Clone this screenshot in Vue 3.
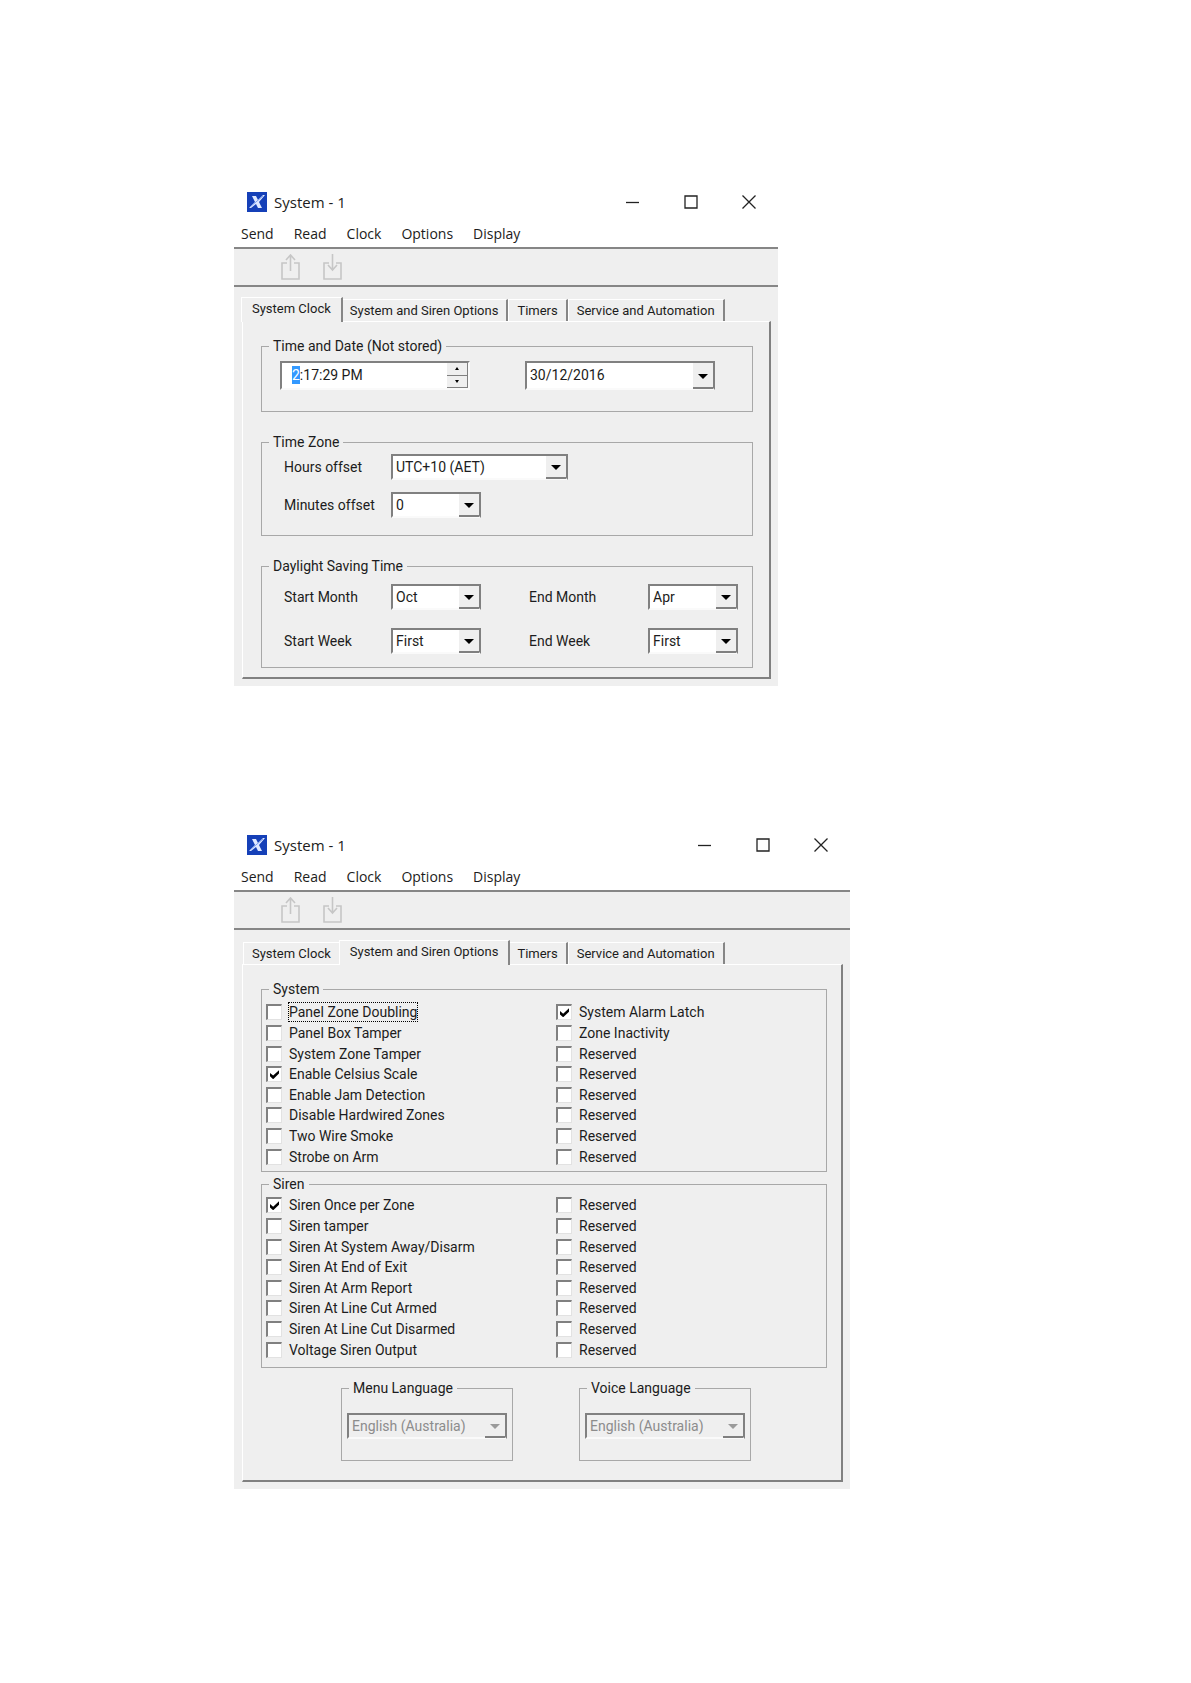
<script setup>
import { onMounted, ref } from 'vue'

const tabs = ['System Clock', 'System and Siren Options', 'Timers', 'Service and Automation']
const menus = ['Send', 'Read', 'Clock', 'Options', 'Display']
const dialogs = [
  { id: 'clock', active: 0 },
  { id: 'options', active: 1 }
]

const daylight = [
  { label: 'Start Month', value: 'Oct' },
  { label: 'End Month', value: 'Apr' },
  { label: 'Start Week', value: 'First' },
  { label: 'End Week', value: 'First' }
]

const toOptions = (names, checked) =>
  names.map((label) => ({ label, checked: checked.includes(label), focused: label === 'Panel Zone Doubling' }))
const reserved = (count) => Array(count).fill('Reserved')

const optionGroups = ref([
  {
    title: 'System',
    items: toOptions(
      [
        'Panel Zone Doubling', 'Panel Box Tamper', 'System Zone Tamper', 'Enable Celsius Scale',
        'Enable Jam Detection', 'Disable Hardwired Zones', 'Two Wire Smoke', 'Strobe on Arm',
        'System Alarm Latch', 'Zone Inactivity', ...reserved(6)
      ],
      ['Enable Celsius Scale', 'System Alarm Latch']
    )
  },
  {
    title: 'Siren',
    items: toOptions(
      [
        'Siren Once per Zone', 'Siren tamper', 'Siren At System Away/Disarm', 'Siren At End of Exit',
        'Siren At Arm Report', 'Siren At Line Cut Armed', 'Siren At Line Cut Disarmed',
        'Voltage Siren Output', ...reserved(8)
      ],
      ['Siren Once per Zone']
    )
  }
])

const languages = ['Menu Language', 'Voice Language']

const time = ref('2:17:29 PM')
const date = ref('30/12/2016')
const timeInput = ref(null)

onMounted(() => {
  const field = [timeInput.value].flat()[0]
  field.focus({ preventScroll: true })
  field.setSelectionRange(0, 1)
})
</script>

<template>
  <main class="page">
    <section v-for="dialog in dialogs" :key="dialog.id" class="window" :class="dialog.id">
      <header class="titlebar">
        <svg class="logo" viewBox="0 0 20 20" aria-hidden="true">
          <rect width="20" height="20" fill="#1540b8" />
          <path d="M5 4h4l2 4 5-5h2l-6 7 3 6h-4l-2-4-5 4H2l6-6z" fill="#dfe8ff" />
          <path d="M3 15 16 4" stroke="#7fa0ee" stroke-width="1" />
        </svg>
        <h1>System - 1</h1>
        <button type="button" aria-label="Minimize">
          <svg viewBox="0 0 14 14"><path d="M0 7.5h13" /></svg>
        </button>
        <button type="button" aria-label="Maximize">
          <svg viewBox="0 0 14 14"><path d="M1 1h12v12H1z" /></svg>
        </button>
        <button type="button" aria-label="Close">
          <svg viewBox="0 0 14 14"><path d="m.5.5 13 13m0-13-13 13" /></svg>
        </button>
      </header>

      <nav class="menubar">
        <button v-for="menu in menus" :key="menu" type="button">{{ menu }}</button>
      </nav>

      <div class="toolbar">
        <button type="button" aria-label="Send" disabled>
          <svg viewBox="0 0 20 26"><path d="M6 9H1v16h17V9h-5M9.500 17V1M5 6l4.500-5L14 6" /></svg>
        </button>
        <button type="button" aria-label="Read" disabled>
          <svg viewBox="0 0 20 26"><path d="M6 9H1v16h17V9h-5M9.500 0v16M5 11l4.500 5 4.500-5" /></svg>
        </button>
      </div>

      <div class="body">
        <div class="tabs" role="tablist">
          <button
            v-for="(tab, i) in tabs"
            :key="tab"
            type="button"
            role="tab"
            :aria-selected="i === dialog.active"
            :class="{ active: i === dialog.active }"
          >{{ tab }}</button>
        </div>

        <form v-if="dialog.id === 'clock'" class="panel" @submit.prevent>
          <fieldset>
            <legend>Time and Date (Not stored)</legend>
            <div class="clock-row">
              <div class="time">
                <input ref="timeInput" v-model="time" type="text" aria-label="Time" />
                <div class="spin">
                  <button type="button" aria-label="Increase"><i class="up"></i></button>
                  <button type="button" aria-label="Decrease"><i class="down"></i></button>
                </div>
              </div>
              <div class="combo date">
                <input v-model="date" type="text" aria-label="Date" />
              </div>
            </div>
          </fieldset>

          <fieldset>
            <legend>Time Zone</legend>
            <div class="fields zone">
              <label for="hours">Hours offset</label>
              <div class="combo hours"><select id="hours"><option>UTC+10 (AET)</option></select></div>
              <label for="minutes">Minutes offset</label>
              <div class="combo"><select id="minutes"><option>0</option></select></div>
            </div>
          </fieldset>

          <fieldset>
            <legend>Daylight Saving Time</legend>
            <div class="fields daylight">
              <template v-for="(field, i) in daylight" :key="field.label">
                <label :for="'dst-' + i">{{ field.label }}</label>
                <div class="combo"><select :id="'dst-' + i"><option>{{ field.value }}</option></select></div>
              </template>
            </div>
          </fieldset>
        </form>

        <form v-else class="panel" @submit.prevent>
          <fieldset v-for="group in optionGroups" :key="group.title">
            <legend>{{ group.title }}</legend>
            <div class="checks" :class="group.title.toLowerCase()">
              <label v-for="(item, i) in group.items" :key="i">
                <input v-model="item.checked" type="checkbox" />
                <span :class="{ focused: item.focused }">{{ item.label }}</span>
              </label>
            </div>
          </fieldset>
          <div class="languages">
            <fieldset v-for="language in languages" :key="language">
              <legend>{{ language }}</legend>
              <div class="combo disabled">
                <select disabled :aria-label="language"><option>English (Australia)</option></select>
              </div>
            </fieldset>
          </div>
        </form>
      </div>
    </section>
  </main>
</template>

<style>
body {
  margin: 0;
  background: #fff;
}
</style>

<style scoped>
* {
  box-sizing: border-box;
}

.page {
  display: flex;
  flex-direction: column;
  gap: 141px;
  padding: 184px 24px 184px 234px;
  color: #1c1c20;
  font: 14px/18px Roboto, "Liberation Sans", Arial, sans-serif;
}

button,
input,
select {
  margin: 0;
  padding: 0;
  border: 0;
  border-radius: 0;
  outline: 0;
  background: none;
  color: inherit;
  font: inherit;
  appearance: none;
}

.window {
  width: 100%;
  max-width: 544px;
  background: #efefef;
}

.window.options {
  max-width: 616px;
}

.titlebar,
.menubar {
  display: flex;
  align-items: center;
  background: #fff;
  font: 15px/20px "Open Sans", "Noto Sans", sans-serif;
}

.titlebar {
  height: 36px;
  padding-left: 13px;
}

.logo {
  width: 20px;
  height: 20px;
}

h1 {
  flex: 1;
  margin: 0 0 0 7px;
  font: inherit;
}

.titlebar button {
  display: grid;
  place-items: center;
  width: 58px;
  height: 36px;
}

.titlebar button svg {
  width: 14px;
  height: 14px;
  fill: none;
  stroke: #222;
  stroke-width: 1.3;
}

.menubar {
  gap: 20px;
  height: 27px;
  padding-left: 7px;
  font-size: 14px;
}

.toolbar {
  display: flex;
  align-items: center;
  gap: 22px;
  height: 40px;
  padding-left: 47px;
  border: solid #868686;
  border-width: 2px 0;
}

.toolbar button {
  width: 20px;
  height: 26px;
}

.toolbar svg {
  display: block;
  fill: none;
  stroke: #c6c6c6;
  stroke-width: 1.6;
}

.body {
  padding: 10px 7px 7px 8px;
}

.tabs {
  display: flex;
  align-items: flex-end;
  height: 24px;
  padding-left: 1px;
  font-size: 13px;
}

.tabs button {
  height: 22px;
  padding: 0 8px;
  border: solid #fff;
  border-width: 1px 2px 0 1px;
  border-right-color: #868686;
  background: #efefef;
  white-space: nowrap;
}

.tabs .active {
  z-index: 1;
  height: 25px;
  margin: 0 -2px -1px;
  padding: 0 10px 3px;
}

.panel {
  display: flex;
  flex-direction: column;
  gap: 21px;
  padding: 15px 16px 9px 18px;
  border: solid #808080;
  border-width: 1px 2px 2px 1px;
  border-top-color: #fff;
  border-left-color: #fff;
}

.options .panel {
  gap: 3px;
  padding: 15px 14px 19px 18px;
}

fieldset {
  min-width: 0;
  margin: 0;
  padding: 0;
  border: 1px solid #a8a8a8;
}

legend {
  margin-left: 7px;
  padding: 0 4px;
  background: #efefef;
}

.clock-row {
  display: flex;
  gap: 55px;
  padding: 6px 18px 21px;
}

.time,
.combo {
  position: relative;
  width: 90px;
  height: 26px;
  border: 2px solid #808080;
  border-bottom-color: #fafafa;
  background: #fff;
}

.time {
  display: flex;
  width: 190px;
  height: 29px;
  border-right-color: #fafafa;
}

.time input {
  flex: 1;
  min-width: 0;
  padding: 0 0 2px 10px;
}

.time input::selection {
  background: #3399ff;
  color: #fff;
}

.spin {
  display: flex;
  flex-direction: column;
  width: 21px;
  background: #efefef;
}

.spin button {
  display: grid;
  flex: 1;
  place-items: center;
  border: solid #808080;
  border-width: 0 1px 1px 0;
}

.spin i {
  border: solid transparent;
  border-width: 0 2px;
}

.spin .up {
  border-bottom: 3px solid #000;
}

.spin .down {
  border-top: 3px solid #000;
}

.combo input,
.combo select {
  display: block;
  width: 100%;
  height: 100%;
  padding: 0 22px 0 3px;
}

.combo::before {
  content: "";
  position: absolute;
  top: 0;
  right: 0;
  bottom: -1px;
  width: 20px;
  border: solid #808080;
  border-width: 0 0 2px;
  background: #efefef;
  pointer-events: none;
}

.combo::after {
  content: "";
  position: absolute;
  top: 50%;
  right: 5px;
  margin-top: -2px;
  border: solid transparent;
  border-width: 5px 5px 0;
  border-top-color: #000;
  pointer-events: none;
}

.combo.date {
  width: 190px;
  height: 29px;
}

.combo.date input {
  padding-bottom: 2px;
}

.combo.hours {
  width: 177px;
}

.combo.disabled {
  width: 160px;
  margin: 16px 5px 21px;
  background: #efefef;
  color: #8c8c8c;
}

.combo.disabled select {
  color: #8c8c8c;
  opacity: 1;
}

.combo.disabled::after {
  border-top-color: #9a9a9a;
}

.fields {
  display: grid;
  align-items: center;
  padding-left: 22px;
}

.zone {
  grid-template-columns: 107px 1fr;
  row-gap: 12px;
  padding-top: 3px;
  padding-bottom: 17px;
}

.daylight {
  grid-template-columns: 107px 138px 119px 1fr;
  row-gap: 18px;
  padding-top: 9px;
  padding-bottom: 13px;
}

.checks {
  display: grid;
  grid-auto-flow: column;
  grid-template-columns: 290px 1fr;
  grid-template-rows: repeat(8, 1fr);
  min-height: 165px;
  margin: 4px 0 4px 4px;
}

.checks.siren {
  margin-top: 2px;
  margin-bottom: 7px;
}

.checks label {
  display: flex;
  align-items: center;
  gap: 7px;
}

.checks input {
  width: 16px;
  height: 16px;
  border: solid #808080;
  border-width: 2px 1px 1px 2px;
  border-right-color: #e2e2e2;
  border-bottom-color: #e2e2e2;
  background: #fff;
}

.checks input:checked::before {
  content: "";
  display: block;
  width: 9px;
  height: 9px;
  margin: 2px;
  background: #000;
  clip-path: polygon(0 30%, 35% 60%, 100% 0, 100% 38%, 35% 100%, 0 68%);
}

.focused {
  outline: 1px dotted #000;
}

.languages {
  display: flex;
  gap: 66px;
  margin-top: 8px;
  padding-left: 80px;
}
</style>
